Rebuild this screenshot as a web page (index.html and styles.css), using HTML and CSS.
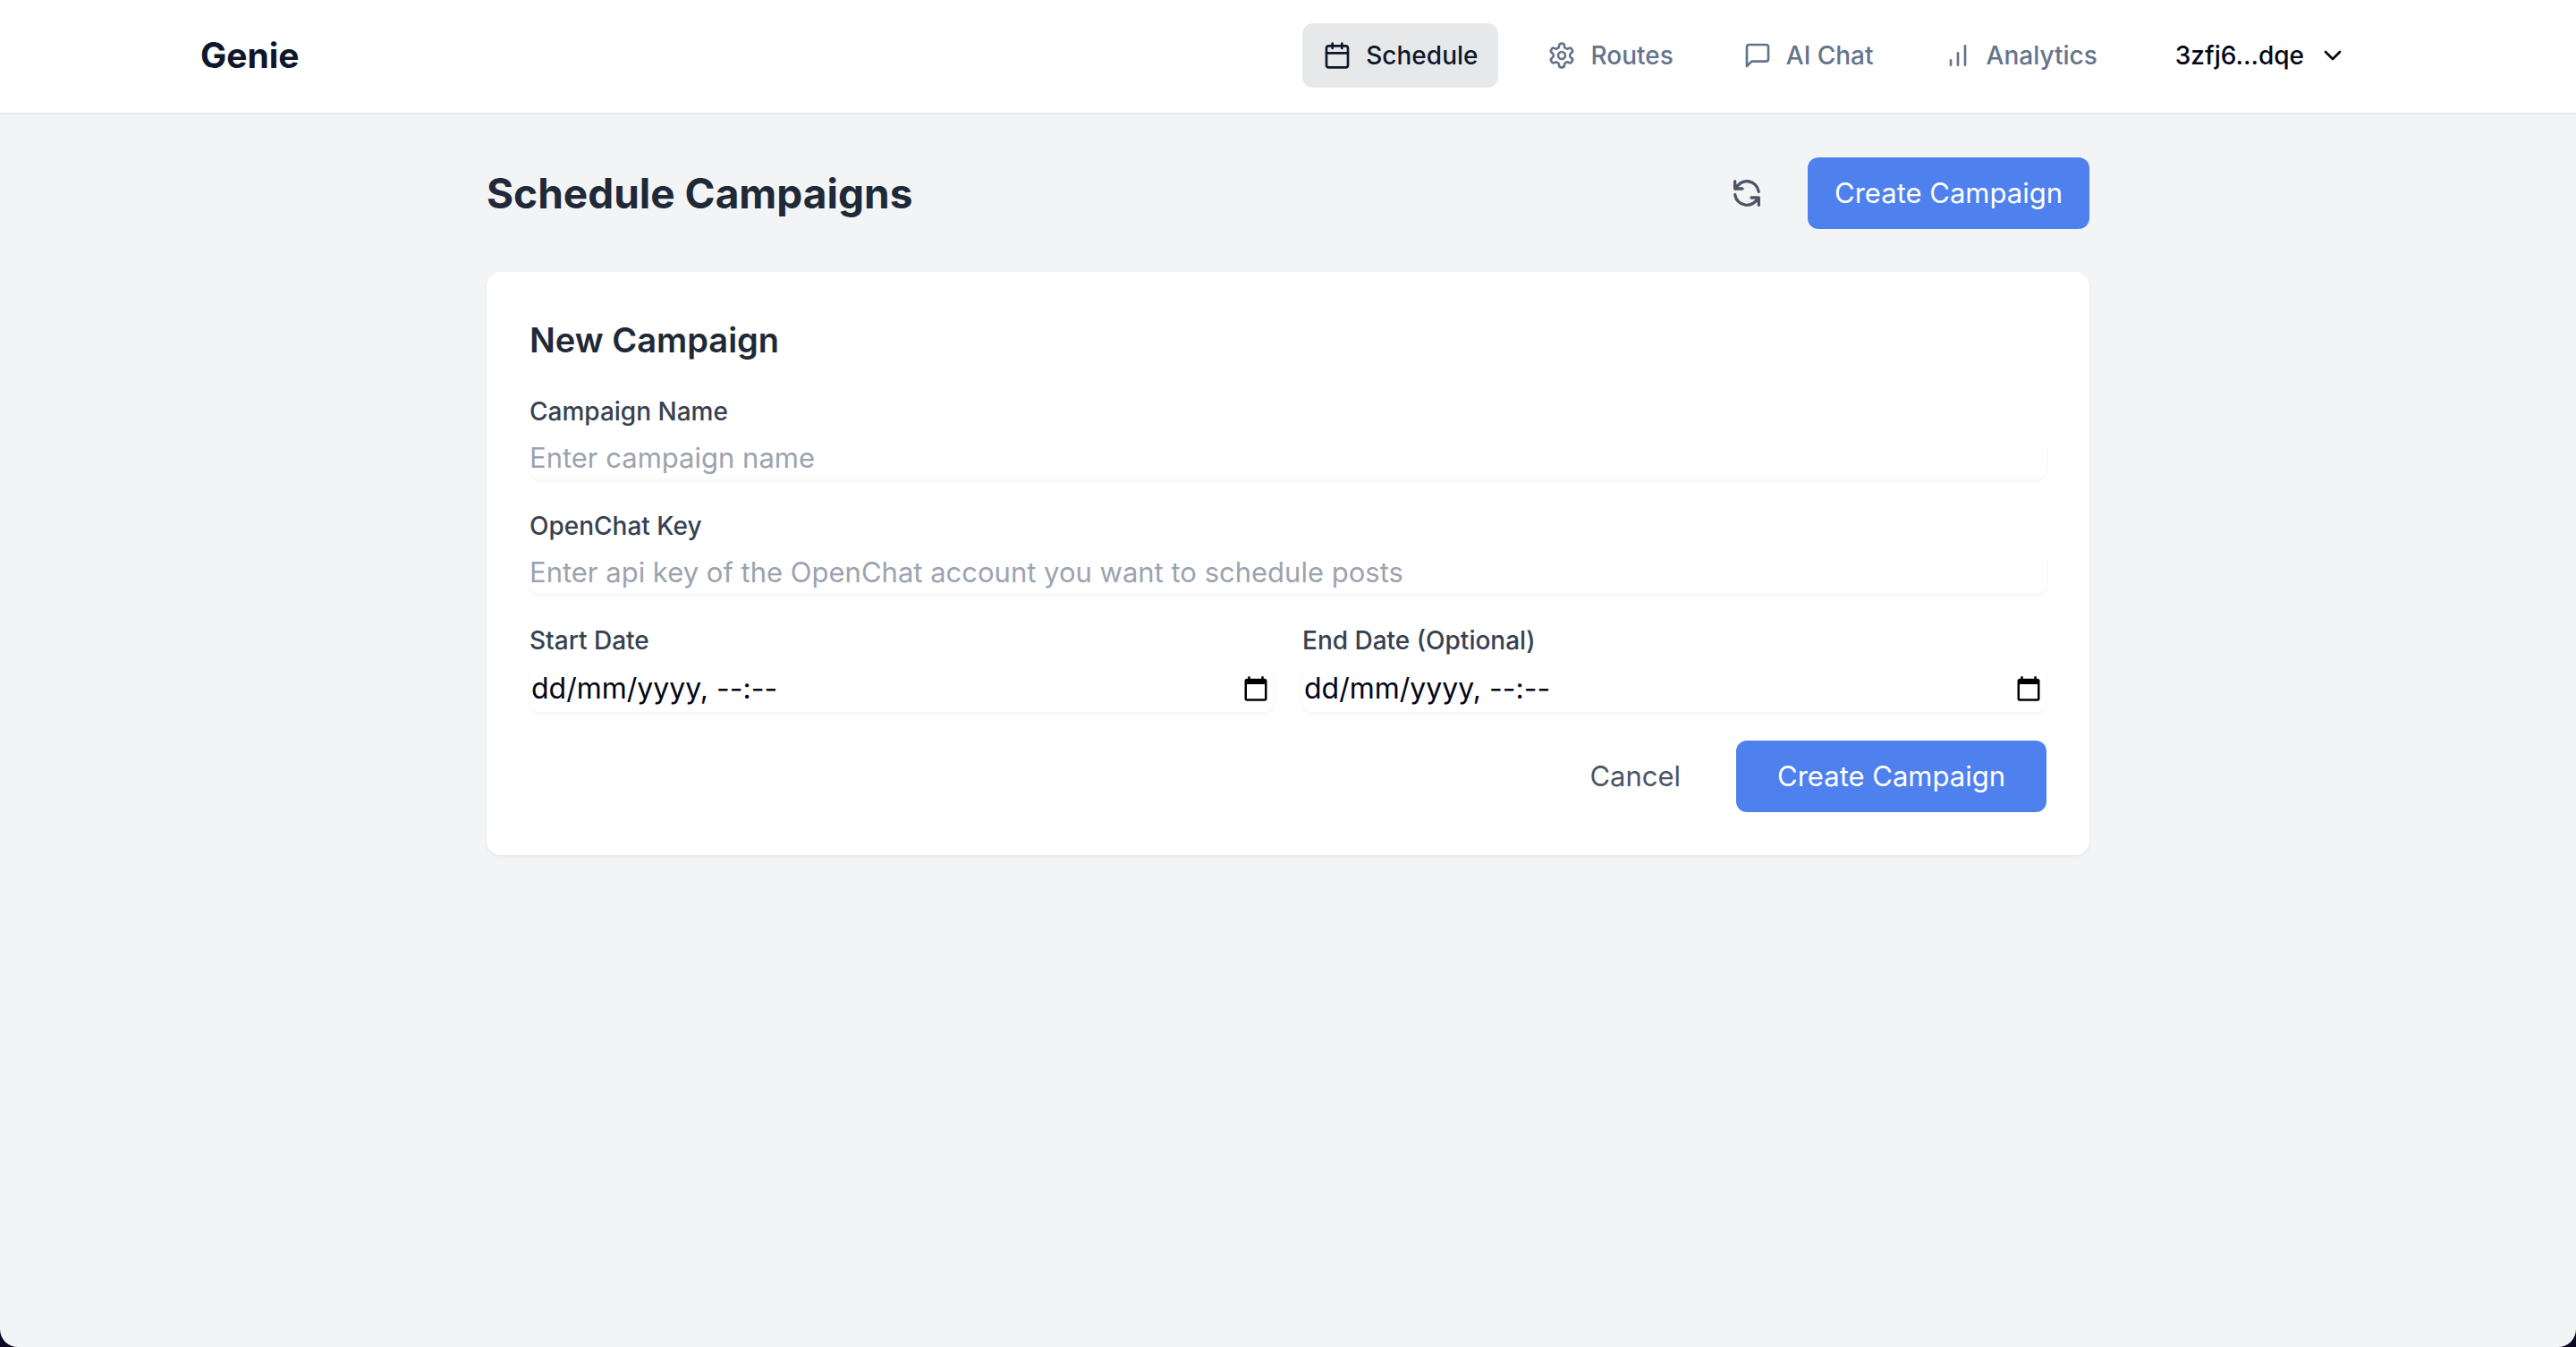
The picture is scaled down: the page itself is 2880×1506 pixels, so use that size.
FILE: index.html
```html
<!DOCTYPE html>
<html lang="en-GB">
<head>
<meta charset="utf-8">
<title>Genie</title>
<link rel="stylesheet" href="styles.css">
</head>
<body>
<header class="topbar">
  <div class="topbar-inner">
    <a class="brand" href="#">Genie</a>
    <nav class="nav">
      <a class="nav-link active" href="#">
        <svg class="icon" viewBox="0 0 24 24"><path d="M8 2v4M16 2v4M3 10h18"/><rect x="3" y="4" width="18" height="18" rx="2"/></svg>
        Schedule
      </a>
      <a class="nav-link" href="#">
        <svg class="icon" viewBox="0 0 24 24"><path d="M12.22 2h-.44a2 2 0 0 0-2 2v.18a2 2 0 0 1-1 1.73l-.43.25a2 2 0 0 1-2 0l-.15-.08a2 2 0 0 0-2.73.73l-.22.38a2 2 0 0 0 .73 2.73l.15.1a2 2 0 0 1 1 1.72v.51a2 2 0 0 1-1 1.74l-.15.09a2 2 0 0 0-.73 2.73l.22.38a2 2 0 0 0 2.73.73l.15-.08a2 2 0 0 1 2 0l.43.25a2 2 0 0 1 1 1.73V20a2 2 0 0 0 2 2h.44a2 2 0 0 0 2-2v-.18a2 2 0 0 1 1-1.73l.43-.25a2 2 0 0 1 2 0l.15.08a2 2 0 0 0 2.73-.73l.22-.39a2 2 0 0 0-.73-2.73l-.15-.08a2 2 0 0 1-1-1.74v-.5a2 2 0 0 1 1-1.74l.15-.09a2 2 0 0 0 .73-2.73l-.22-.38a2 2 0 0 0-2.73-.73l-.15.08a2 2 0 0 1-2 0l-.43-.25a2 2 0 0 1-1-1.73V4a2 2 0 0 0-2-2z"/><circle cx="12" cy="12" r="3"/></svg>
        Routes
      </a>
      <a class="nav-link" href="#">
        <svg class="icon" viewBox="0 0 24 24"><path d="M21 15a2 2 0 0 1-2 2H7l-4 4V5a2 2 0 0 1 2-2h14a2 2 0 0 1 2 2z"/></svg>
        AI Chat
      </a>
      <a class="nav-link" href="#">
        <svg class="icon" viewBox="0 0 24 24"><path d="M12 20V10M18 20V4M6 20v-4"/></svg>
        Analytics
      </a>
      <button class="account" type="button">
        3zfj6...dqe
        <svg class="icon" viewBox="0 0 24 24"><path d="m6 9 6 6 6-6"/></svg>
      </button>
    </nav>
  </div>
</header>

<main class="page">
  <div class="page-head">
    <h1 class="page-title">Schedule Campaigns</h1>
    <div class="page-actions">
      <button class="refresh" type="button" aria-label="Refresh">
        <svg class="icon icon-large" viewBox="0 0 24 24"><path d="M4 4v5h.582m15.356 2A8.001 8.001 0 004.582 9m0 0H9m11 11v-5h-.581m0 0a8.003 8.003 0 01-15.357-2m15.357 2H15"/></svg>
      </button>
      <button class="button primary" type="button">Create Campaign</button>
    </div>
  </div>

  <form class="card">
    <h2 class="card-title">New Campaign</h2>
    <div class="field">
      <label class="label" for="name">Campaign Name</label>
      <input class="input" id="name" type="text" placeholder="Enter campaign name">
    </div>
    <div class="field">
      <label class="label" for="key">OpenChat Key</label>
      <input class="input" id="key" type="text" placeholder="Enter api key of the OpenChat account you want to schedule posts">
    </div>
    <div class="field-row">
      <div class="field">
        <label class="label" for="start">Start Date</label>
        <div class="date">
          <input class="date-input" id="start" type="text" placeholder="dd/mm/yyyy, --:--">
          <button class="picker" type="button" aria-label="Pick start date">
            <svg class="picker-icon" viewBox="0 0 24 24"><path d="M20 3h-1V1h-2v2H7V1H5v2H4c-1.100 0-2 .9-2 2v16c0 1.100.9 2 2 2h16c1.100 0 2-.9 2-2V5c0-1.100-.9-2-2-2zm0 18H4V8h16v13z"/></svg>
          </button>
        </div>
      </div>
      <div class="field">
        <label class="label" for="end">End Date (Optional)</label>
        <div class="date">
          <input class="date-input" id="end" type="text" placeholder="dd/mm/yyyy, --:--">
          <button class="picker" type="button" aria-label="Pick end date">
            <svg class="picker-icon" viewBox="0 0 24 24"><path d="M20 3h-1V1h-2v2H7V1H5v2H4c-1.100 0-2 .9-2 2v16c0 1.100.9 2 2 2h16c1.100 0 2-.9 2-2V5c0-1.100-.9-2-2-2zm0 18H4V8h16v13z"/></svg>
          </button>
        </div>
      </div>
    </div>
    <div class="form-actions">
      <button class="button plain" type="button">Cancel</button>
      <button class="button primary wide" type="submit">Create Campaign</button>
    </div>
  </form>
</main>
</body>
</html>
```
FILE: styles.css
```css
*, *::before, *::after { box-sizing: border-box; }

html { background: #0b0720; }

body {
  margin: 0;
  min-height: 100vh;
  background: #f3f4f6;
  border-radius: 0 0 20px 20px;
  color: #020617;
  font-family: Inter, "Liberation Sans", sans-serif;
  font-size: 31px;
  line-height: 48px;
}

h1, h2 { margin: 0; }
a { color: inherit; text-decoration: none; }

button, input {
  margin: 0;
  padding: 0;
  border: 0;
  background: none;
  color: inherit;
  font: inherit;
}

button { cursor: pointer; }

.icon {
  flex: none;
  width: 32px;
  height: 32px;
  fill: none;
  stroke: currentColor;
  stroke-width: 2;
  stroke-linecap: round;
  stroke-linejoin: round;
}

.icon-large { display: block; width: 40px; height: 40px; }

.topbar { background: #fff; border-bottom: 2px solid #e5e7eb; }

.topbar-inner {
  display: flex;
  align-items: center;
  justify-content: space-between;
  max-width: 2560px;
  margin: 0 auto;
  padding: 26px 64px 28px;
}

.brand { color: #0f172a; font-size: 39px; font-weight: 700; line-height: 56px; }

.nav { display: flex; align-items: center; gap: 32px; }

.nav-link, .account {
  display: flex;
  align-items: center;
  gap: 16px;
  height: 72px;
  padding: 0 24px;
  border-radius: 12px;
  color: #64748b;
  font-size: 28px;
  font-weight: 500;
  line-height: 40px;
  white-space: nowrap;
}

.nav-link { padding: 0 23px; }
.nav-link.active { background: #e7e8ea; color: #0f172a; }
.account { padding: 0 32px; color: #020617; }

.page {
  max-width: 1792px;
  margin: 0 auto;
  padding: 48px 0;
}

.page-head {
  display: flex;
  align-items: center;
  justify-content: space-between;
  margin-bottom: 48px;
}

.page-title { color: #1f2937; font-size: 46px; font-weight: 700; line-height: 64px; }

.page-actions { display: flex; align-items: center; gap: 32px; }

.refresh { padding: 16px; border-radius: 12px; color: #4b5563; }

.button { padding: 16px 30px; border-radius: 12px; white-space: nowrap; }
.primary { background: #4f81ee; color: #fff; }
.plain, .wide { padding: 16px 46px; }
.plain { color: #4b5563; }

.card {
  display: flex;
  flex-direction: column;
  gap: 32px;
  padding: 48px;
  border-radius: 16px;
  background: #fff;
  box-shadow: 0 2px 4px rgba(0, 0, 0, 0.05);
}

.card-title { color: #1f2937; font-size: 38px; font-weight: 600; line-height: 56px; }

.field { display: flex; flex-direction: column; gap: 8px; }
.field-row { display: grid; grid-template-columns: 1fr 1fr; gap: 32px; }

.label { color: #374151; font-size: 28px; font-weight: 500; line-height: 40px; }

.input, .date {
  width: 100%;
  height: 48px;
  border-radius: 12px;
  box-shadow: 0 2px 4px rgba(0, 0, 0, 0.05);
}

.input::placeholder { color: #9ca3af; opacity: 1; }

.date {
  display: flex;
  align-items: center;
  height: 52px;
  padding: 0 5px 0 2px;
}

.date-input { flex: 1; min-width: 0; font-size: 32px; }
.date-input::placeholder { color: #020617; opacity: 1; }

.picker-icon { display: block; width: 30px; height: 30px; fill: #000; }

.form-actions { display: flex; justify-content: flex-end; gap: 16px; }
```
